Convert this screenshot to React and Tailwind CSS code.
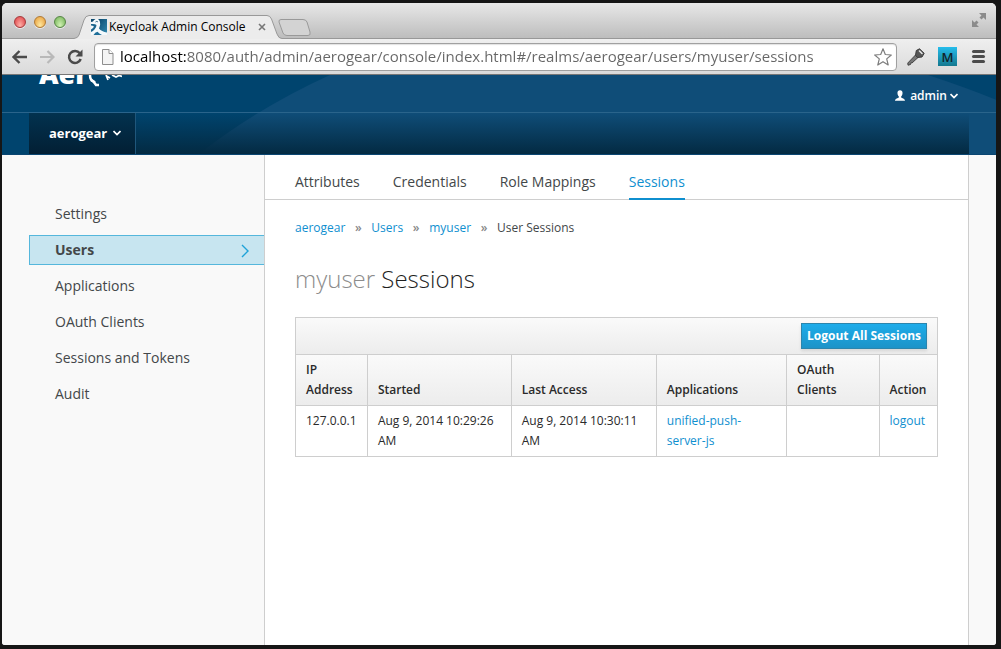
import React from "react";

function TrafficLight({ label, className }) {
  return (
    <button
      type="button"
      aria-label={label}
      className={`h-3 w-3 rounded-full border shadow-[0_1px_0_rgba(255,255,255,0.6)] ${className}`}
    />
  );
}

function Favicon() {
  return (
    <svg viewBox="0 0 16 16" className="h-4 w-4 shrink-0" aria-hidden="true">
      <defs>
        <linearGradient id="fav" x1="0" y1="0" x2="1" y2="1">
          <stop offset="0" stopColor="#0d4a6e" />
          <stop offset="1" stopColor="#2f86ad" />
        </linearGradient>
      </defs>
      <rect width="16" height="16" fill="#f3f9fc" />
      <path d="M0 0 H4.500 Q2.500 1 2 2.500 L0 3 Z" fill="#0d4a6e" />
      <path d="M7 0 H16 V13.500 Q10.500 12.500 8 9.500 Q9.800 6 9 3 Q8.500 1 7 0 Z" fill="url(#fav)" />
      <path d="M0 5 Q4 4.500 5.500 6 Q5.500 8.500 3.500 10.500 Q2 12 0 13 V10.500 Q2.500 9 3 7.500 Q1.500 6.500 0 6.500 Z" fill="#1b658d" />
      <path d="M2.500 16 Q4 13.200 6.500 12.800 Q8 14.500 11 16 Z" fill="#1f6f99" />
      <path d="M4.500 3 Q5.500 2 6.800 2.800" fill="none" stroke="#0d4a6e" strokeWidth="0.900" />
    </svg>
  );
}

function TitleBar() {
  return (
    <div className="flex h-9 items-end rounded-t-[5px] border-b border-[#989898] bg-linear-to-b from-[#e8e8e8] to-[#bdbdbd]">
      <div className="flex h-9 items-center gap-2 pt-1 pl-3">
        <TrafficLight label="Close window" className="border-[#a5393b] bg-radial-[at_50%_85%] from-[#ffb0a8] to-[#dc3d42]" />
        <TrafficLight label="Minimize window" className="border-[#b07a35] bg-radial-[at_50%_85%] from-[#ffe9a0] to-[#e69a35]" />
        <TrafficLight label="Zoom window" className="border-[#568546] bg-radial-[at_50%_85%] from-[#d2f3b5] to-[#6fb052]" />
      </div>
      <div className="-mb-px ml-2 grid h-6 w-52 shrink-0">
        <svg viewBox="0 0 208 24" className="col-start-1 row-start-1 h-6 w-52" aria-hidden="true">
          <path d="M0 23.500 Q4 23 5 20 L10 5 Q11.500 0.500 15 0.500 H193 Q196 0.500 197.500 4 L203 19 Q204.500 23.500 208 23.500 V24 H0 Z" fill="#ececec" />
          <path d="M0 23.500 Q4 23 5 20 L10 5 Q11.500 0.500 15 0.500 H193 Q196 0.500 197.500 4 L203 19 Q204.500 23.500 208 23.500" fill="none" stroke="#999" />
        </svg>
        <div className="col-start-1 row-start-1 flex items-center gap-0.5 pr-3.5 pl-[17px]">
          <Favicon />
          <span className="flex-1 whitespace-nowrap font-['Open_Sans','Noto_Sans',sans-serif] text-[12px] leading-4 text-black">
            Keycloak Admin Console
          </span>
          <button type="button" aria-label="Close tab" className="grid h-3 w-3 place-items-center">
            <svg viewBox="0 0 8 8" className="h-2 w-2" fill="none" stroke="#777" strokeWidth="1.600" aria-hidden="true">
              <path d="M1 1 L7 7 M7 1 L1 7" />
            </svg>
          </button>
        </div>
      </div>
      <button type="button" aria-label="New tab" className="-ml-1 h-5 w-[33px] pb-0.5">
        <svg viewBox="0 0 33 17" className="h-[17px] w-[33px]" aria-hidden="true">
          <path d="M3 0.500 H25 Q28 0.500 29 3 L32 13 Q33 16.500 30 16.500 H9 Q6 16.500 5 14 L1 3 Q0.500 0.500 3 0.500 Z" fill="#d3d3d3" stroke="#999" />
        </svg>
      </button>
      <button type="button" aria-label="Enter full screen" className="mr-[7px] mb-2 ml-auto grid h-5 w-5 place-items-center">
        <svg viewBox="0 0 16 16" className="h-4 w-4" fill="#8b8b8b" aria-hidden="true">
          <path d="M8 1 H15 V8 L12.500 5.500 L10.500 7.500 L8.500 5.500 L10.500 3.500 Z" />
          <path d="M1 8 L3.500 10.500 L5.500 8.500 L7.500 10.500 L5.500 12.500 L8 15 H1 Z" />
        </svg>
      </button>
    </div>
  );
}

function Toolbar() {
  return (
    <div className="flex h-9 items-center border-b border-[#777] bg-linear-to-b from-[#efefef] to-[#dadada] pr-2 pl-[9px]">
      <button type="button" aria-label="Back" className="mr-3 h-4 w-4">
        <svg viewBox="0 0 16 16" className="h-4 w-4" fill="none" stroke="#4b4b4b" strokeWidth="2.400" aria-hidden="true">
          <path d="M8.500 2 L2.500 8 L8.500 14 M2.500 8 H16" />
        </svg>
      </button>
      <button type="button" aria-label="Forward" className="mr-3 h-4 w-4">
        <svg viewBox="0 0 16 16" className="h-4 w-4" fill="none" stroke="#b9b9b9" strokeWidth="2.200" aria-hidden="true">
          <path d="M8.500 2 L14.500 8 L8.500 14 M14.500 8 H1" />
        </svg>
      </button>
      <button type="button" aria-label="Reload" className="mr-[11px] h-4 w-4">
        <svg viewBox="0 0 16 16" className="h-4 w-4" aria-hidden="true">
          <path d="M12.800 4.300 A6 6 0 1 0 13.700 10" fill="none" stroke="#4b4b4b" strokeWidth="2.500" />
          <path d="M15.500 0.500 V7.500 H8.500 Z" fill="#4b4b4b" />
        </svg>
      </button>
      <div className="flex h-7 flex-1 items-center rounded-[4px] border border-[#a0a0a0] bg-white pr-1 pl-1.5 shadow-[inset_0_1px_1px_rgba(0,0,0,0.12)]">
        <svg viewBox="0 0 13 16" className="mr-1.5 h-4 w-[13px] shrink-0" aria-hidden="true">
          <path d="M1.500 0.500 H8 L12 4.500 V15.500 H1.500 Z" fill="#f4f4f4" stroke="#8e8e8e" />
          <path d="M8 0.500 V4.500 H12" fill="#fff" stroke="#8e8e8e" />
        </svg>
        <input
          type="text"
          aria-label="Address"
          defaultValue="localhost:8080/auth/admin/aerogear/console/index.html#/realms/aerogear/users/myuser/sessions"
          className="h-6 min-w-0 flex-1 bg-linear-to-r from-black from-[66px] to-[#666] to-[66px] bg-clip-text pb-0.5 font-['Open_Sans','Noto_Sans',sans-serif] text-[15px] text-transparent caret-black outline-none"
        />
        <button type="button" aria-label="Bookmark this page" className="h-[18px] w-[18px] shrink-0">
          <svg viewBox="0 0 18 18" className="h-[18px] w-[18px]" fill="#fff" stroke="#7d7d7d" strokeWidth="1.200" strokeLinejoin="round" aria-hidden="true">
            <path d="M9 0.800 L11.300 6.500 L17.300 7 L12.700 10.900 L14.200 17 L9 13.700 L3.800 17 L5.300 10.900 L0.700 7 L6.700 6.500 Z" />
          </svg>
        </button>
      </div>
      <button type="button" aria-label="Password manager" className="ml-2.5 h-[18px] w-[18px]">
        <svg viewBox="0 0 18 18" className="h-[18px] w-[18px]" aria-hidden="true">
          <path d="M8.500 7 L11 9.500 L5 15 L4.200 14.600 L3.500 16.500 L1 17.200 L0.800 15 Z" fill="#777" stroke="#444" />
          <path d="M9.300 2.500 L12.500 0.800 L17.200 5.300 L15 9 L10.500 9.500 L8.500 7.300 Z" fill="#555" stroke="#3c3c3c" />
          <path d="M12.500 3 L15 5.500" stroke="#e8e8e8" strokeWidth="1.600" strokeLinecap="round" />
        </svg>
      </button>
      <button
        type="button"
        aria-label="M extension"
        className="ml-[13px] grid h-[19px] w-[19px] place-items-center bg-linear-to-b from-[#25bdec] to-[#14788f] font-['Open_Sans',sans-serif] text-[13px] leading-4 font-semibold text-[#12232b]"
      >
        M
      </button>
      <button type="button" aria-label="Menu" className="mr-[3px] ml-[15px] flex w-[13px] flex-col gap-0.5">
        <span className="h-[3px] rounded-full bg-[#4b4b4b]" />
        <span className="h-[3px] rounded-full bg-[#4b4b4b]" />
        <span className="h-[3px] rounded-full bg-[#4b4b4b]" />
      </button>
    </div>
  );
}

function ChevronDown() {
  return (
    <svg viewBox="0 0 8 6" className="h-1.5 w-2" fill="none" stroke="#fff" strokeWidth="1.700" aria-hidden="true">
      <path d="M0.500 1 L4 4.500 L7.500 1" />
    </svg>
  );
}

function Header() {
  return (
    <header className="relative isolate h-20 overflow-hidden border-b border-[#0a4672] bg-[#00446e]">
      <svg viewBox="0 0 994 80" preserveAspectRatio="none" className="absolute inset-0 -z-10 h-full w-full" aria-hidden="true">
        <path d="M197 80 Q258 32 328 0 H926 Q962 12 994 25 V80 Z" fill="#0f4d78" />
      </svg>
      <div className="flex h-[38px] items-center justify-between border-b border-[#2a648b] pr-[38px] pl-[37px]">
        <div className="flex self-start">
          <span className="-mt-5 h-8 font-['Open_Sans',sans-serif] text-[27px] leading-[38px] font-extrabold text-white">Aer</span>
          <svg viewBox="0 0 34 14" className="h-3.5 w-[34px]" fill="none" stroke="#fff" aria-hidden="true">
            <path d="M2 0 Q2 5 5.500 6.500 L8 10 L11 10" strokeWidth="2.500" />
            <path d="M3 5 L7 7.500" strokeWidth="2.500" />
            <path d="M18 0 L20 5 M18.500 1 L22 3" strokeWidth="1.700" />
            <path d="M24 0 L28 2 L31 0.500 L34 1.500" strokeWidth="1.800" />
          </svg>
        </div>
        <button type="button" className="flex items-center gap-[3px] pt-1 text-[12px] leading-4 font-semibold text-white">
          <svg viewBox="0 0 10 11" className="mr-0.5 h-[11px] w-2.5" fill="#fff" aria-hidden="true">
            <path d="M5 0.300 C6.900 0.300 7.700 1.600 7.500 3.400 C7.400 4.900 6.800 5.700 6.200 6.300 V7.400 C6.800 8.300 10 8.200 10 10.800 H0 C0 8.200 3.200 8.300 3.800 7.400 V6.300 C3.200 5.700 2.600 4.900 2.500 3.400 C2.300 1.600 3.100 0.300 5 0.300 Z" />
          </svg>
          admin
          <ChevronDown />
        </button>
      </div>
      <nav aria-label="Realm" className="mx-[27px] flex h-[41px] bg-linear-to-b from-transparent to-[#032a42]">
        <button
          type="button"
          className="flex items-center gap-1.5 border-r border-[#1f577c] bg-linear-to-b from-[#02324f] to-[#021f34] pr-3.5 pb-0.5 pl-5 text-[13px] leading-5 font-bold text-white"
        >
          aerogear
          <ChevronDown />
        </button>
      </nav>
    </header>
  );
}

const sections = ["Settings", "Users", "Applications", "OAuth Clients", "Sessions and Tokens", "Audit"];

function Sidebar() {
  return (
    <aside className="w-[263px] shrink-0 border-r border-[#cecece] bg-[#f9f9f9] pt-11 pl-[27px]">
      <ul className="flex flex-col gap-1.5">
        {sections.map((name) => (
          <li key={name}>
            <a
              href="#"
              aria-current={name === "Users" ? "page" : undefined}
              className={
                name === "Users"
                  ? "flex h-[30px] items-start justify-between border border-r-0 border-[#55b7dc] bg-[#c7e5f0] pt-1 pr-[15px] pl-[25px] text-[14px] leading-5 font-bold"
                  : "flex h-[30px] items-start pt-[5px] pl-[26px] text-[14px] leading-5"
              }
            >
              {name}
              {name === "Users" && (
                <svg viewBox="0 0 8 14" className="mt-1 h-3.5 w-2" fill="none" stroke="#1ea2d8" strokeWidth="1.400" aria-hidden="true">
                  <path d="M1 1 L7 7 L1 13" />
                </svg>
              )}
            </a>
          </li>
        ))}
      </ul>
    </aside>
  );
}

const tabs = ["Attributes", "Credentials", "Role Mappings", "Sessions"];
const crumbs = ["aerogear", "Users", "myuser"];

const head = "border border-[#cecece] px-2.5 py-[5px] text-left align-bottom font-semibold";
const cell = "border border-[#cecece] px-2.5 py-[5px] align-top";

function SessionsTable() {
  return (
    <table className="w-full table-fixed border-collapse text-[12px] leading-5 text-[#2a2a2a]">
      <colgroup>
        <col className="w-[11.2%]" />
        <col className="w-[22.4%]" />
        <col className="w-[22.6%]" />
        <col className="w-[20.3%]" />
        <col className="w-[14.4%]" />
        <col className="w-[9.1%]" />
      </colgroup>
      <thead>
        <tr className="bg-linear-to-b from-[#fafafa] to-[#ececec]">
          <td colSpan={6} className="border border-[#cecece] px-2.5 py-[5px]">
            <div className="flex justify-end">
              <button
                type="button"
                className="h-[26px] border border-[#2b85ad] bg-linear-to-b from-[#1dacea] to-[#1c93c8] px-[5px] leading-4 font-bold whitespace-nowrap text-white shadow-[0_2px_3px_rgba(0,0,0,0.1)]"
              >
                Logout All Sessions
              </button>
            </div>
          </td>
        </tr>
        <tr className="bg-linear-to-b from-[#fafafa] to-[#ececec]">
          <th scope="col" className={head}>IP Address</th>
          <th scope="col" className={head}>Started</th>
          <th scope="col" className={head}>Last Access</th>
          <th scope="col" className={head}>Applications</th>
          <th scope="col" className={head}>OAuth Clients</th>
          <th scope="col" className={head}>Action</th>
        </tr>
      </thead>
      <tbody>
        <tr>
          <td className={cell}>127.0.0.1</td>
          <td className={cell}>Aug 9, 2014 10:29:26 AM</td>
          <td className={cell}>Aug 9, 2014 10:30:11 AM</td>
          <td className={cell}>
            <a href="#" className="text-[#0f8fcf]">unified-push-server-js</a>
          </td>
          <td className={cell} />
          <td className={cell}>
            <a href="#" className="text-[#0f8fcf]">logout</a>
          </td>
        </tr>
      </tbody>
    </table>
  );
}

function Content() {
  return (
    <main className="min-w-0 flex-1 border-r border-[#cecece] bg-white">
      <nav aria-label="User" className="flex h-[45px] items-end gap-[33px] border-b border-[#cecece] px-[30px]">
        {tabs.map((name) => (
          <a
            key={name}
            href="#"
            aria-current={name === "Sessions" ? "page" : undefined}
            className={
              name === "Sessions"
                ? "-mb-px border-b-2 border-[#0f8fcf] pb-1.5 text-[14px] leading-5 text-[#0f8fcf]"
                : "-mb-px border-b-2 border-transparent pb-1.5 text-[14px] leading-5"
            }
          >
            {name}
          </a>
        ))}
      </nav>
      <div className="px-[30px] pt-[18px]">
        <ol className="flex gap-[9px] text-[12px] leading-5">
          {crumbs.map((name) => (
            <li key={name} className="flex gap-[9px]">
              <a href="#" className="text-[#0f8fcf]">{name}</a>
              <span aria-hidden="true" className="w-2 text-center font-semibold text-[#888]">»</span>
            </li>
          ))}
          <li>User Sessions</li>
        </ol>
        <h1 className="mt-6 mb-[21px] text-[24px] leading-[34px] font-light text-[#1e1e1e]">
          <span className="text-[#8c8c8c]">myuser</span> Sessions
        </h1>
        <SessionsTable />
      </div>
    </main>
  );
}

export default function App() {
  return (
    <div className="flex min-h-screen bg-[#161616] pt-[3px] pr-[5px] pb-1 pl-0.5 font-['Open_Sans','Noto_Sans',sans-serif] text-[#434749]">
      <div className="flex min-w-0 flex-1 flex-col overflow-hidden rounded-t-[5px] rounded-b-[3px] bg-[#f9f9f9]">
        <TitleBar />
        <Toolbar />
        <Header />
        <div className="flex flex-1">
          <Sidebar />
          <Content />
          <div className="w-[27px] shrink-0 bg-[#f9f9f9]" />
        </div>
      </div>
    </div>
  );
}
